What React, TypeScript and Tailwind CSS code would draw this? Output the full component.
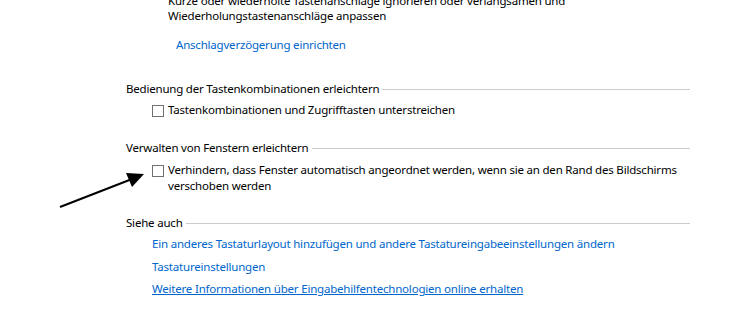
import type { ReactNode } from 'react';

const font = { fontFamily: '"Segoe UI", "Noto Sans", "Open Sans", sans-serif' };

function Heading({ children, className = '' }: { children: ReactNode; className?: string }) {
  return (
    <div className={`flex items-center h-[15px] leading-[15px] ${className}`}>
      <span className="whitespace-nowrap">{children}</span>
      <div className="flex-1 h-px bg-[#cccccc] ml-[3px] mt-px" />
    </div>
  );
}

function Box() {
  return <div className="w-3 h-3 shrink-0 border border-[#707070] bg-white mt-[3px]" />;
}

function Link({ children, underline = false, className = '' }: { children: ReactNode; underline?: boolean; className?: string }) {
  return (
    <div className={`leading-[15px] h-[15px] ${className}`}>
      <a className={`text-[#0066cc] whitespace-nowrap ${underline ? 'underline' : ''}`}>{children}</a>
    </div>
  );
}

export default function App() {
  return (
    <div
      className="relative w-[736px] h-[324px] overflow-hidden bg-white text-[11.5px] tracking-[-0.2px] text-black"
      style={font}
    >
      <div className="pl-[126px] w-[690px]">
        <p className="mt-[-7px] pl-[42px] leading-[15px] whitespace-nowrap">
          Kürze oder wiederholte Tastenanschläge ignorieren oder verlangsamen und
          <br />
          Wiederholungstastenanschläge anpassen
        </p>
        <Link className="mt-[14px] pl-[50px]">Anschlagverzögerung einrichten</Link>

        <Heading className="mt-[29px]">Bedienung der Tastenkombinationen erleichtern</Heading>
        <div className="mt-[6px] pl-[26px] flex gap-1 leading-[16px]">
          <Box />
          <span className="whitespace-nowrap">Tastenkombinationen und Zugrifftasten unterstreichen</span>
        </div>

        <Heading className="mt-[22px]">Verwalten von Fenstern erleichtern</Heading>
        <div className="mt-[7px] pl-[26px] flex gap-1 leading-[16px]">
          <Box />
          <span className="whitespace-nowrap">
            Verhindern, dass Fenster automatisch angeordnet werden, wenn sie an den Rand des Bildschirms
            <br />
            verschoben werden
          </span>
        </div>

        <Heading className="mt-[21px]">Siehe auch</Heading>
        <div className="pl-[26px]">
          <Link className="mt-[6px]">Ein anderes Tastaturlayout hinzufügen und andere Tastatureingabeeinstellungen ändern</Link>
          <Link className="mt-[8px]">Tastatureinstellungen</Link>
          <Link className="mt-[7px]" underline>
            Weitere Informationen über Eingabehilfentechnologien online erhalten
          </Link>
        </div>
      </div>

      <svg className="absolute inset-0 pointer-events-none" width="736" height="324" viewBox="0 0 736 324">
        <line x1="60" y1="207" x2="132" y2="179" stroke="#000" strokeWidth="2" />
        <polygon points="144,174 126,173 132,187" fill="#000" />
      </svg>
    </div>
  );
}
